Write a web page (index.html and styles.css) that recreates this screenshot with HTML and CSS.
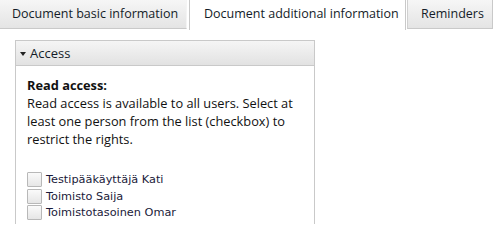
FILE: index.html
```html
<!DOCTYPE html>
<html>
<head>
<meta charset="utf-8">
<link rel="stylesheet" href="styles.css">
</head>
<body>
<div class="tabs">
  <div class="tab first">Document basic information</div>
  <div class="tab active">Document additional information</div>
  <div class="tab last">Reminders</div>
</div>
<div class="panel">
  <div class="box">
    <div class="box-head"><span class="tri"></span>Access</div>
    <div class="box-body">
      <p class="info"><b>Read access:</b><br>Read access is available to all users. Select at least one person from the list (checkbox) to restrict the rights.</p>
      <ul class="people">
        <li><span class="cb"></span>Testipääkäyttäjä Kati</li>
        <li><span class="cb"></span>Toimisto Saija</li>
        <li><span class="cb"></span>Toimistotasoinen Omar</li>
      </ul>
    </div>
  </div>
</div>
</body>
</html>
```
FILE: styles.css
```css
html, body {
  margin: 0;
  padding: 0;
  background: #fff;
}
body {
  font-family: "Open Sans", "DejaVu Sans", sans-serif;
  font-size: 13px;
  color: #111;
}
.tabs {
  display: flex;
  align-items: flex-start;
  height: 30px;
}
.tab {
  height: 28px;
  line-height: 28px;
  padding: 0 12px;
  color: #141c28;
  font-size: 12.5px;
  box-sizing: content-box;
  white-space: nowrap;
}
.tab.first {
  width: 162px;
  background: linear-gradient(#f6f6f6, #e4e4e4);
  border-bottom: 1px solid #c9c9c9;
  border-right: 1px solid #f4f4f4;
}
.tab.active {
  margin-left: 2px;
  width: 201px;
  height: 30px;
  background: #fff;
  border-left: 1px solid #c9c9c9;
  border-right: 1px solid #c9c9c9;
  padding: 0 0 0 14px;
}
.tab.last {
  margin-left: 1px;
  width: 60px;
  padding: 0 11px 0 13px;
  background: linear-gradient(#f6f6f6, #e4e4e4);
  border-left: 1px solid #d0d0d0;
  border-right: 1px solid #c9c9c9;
  border-bottom: 1px solid #c9c9c9;
}
.panel {
  padding: 10px 0 0 15px;
}
.box {
  width: 298px;
  height: 183px;
  border: 1px solid #c9c9c9;
  border-bottom: none;
}
.box-head {
  height: 24px;
  line-height: 24px;
  background: linear-gradient(#f5f5f5, #e2e2e2);
  border-bottom: 1px solid #c9c9c9;
  color: #141c28;
  font-size: 13px;
  display: flex;
  align-items: center;
  padding-left: 4px;
}
.tri {
  width: 0;
  height: 0;
  border-left: 3.5px solid transparent;
  border-right: 3.5px solid transparent;
  border-top: 4px solid #222;
  margin: 1px 4px 0 0;
}
.box-body {
  padding: 10px 11px 0 11px;
}
.info {
  margin: 0;
  line-height: 18px;
  font-size: 12.8px;
}
.info b {
  font-weight: bold;
}
.people {
  list-style: none;
  margin: 23px 0 0 0;
  padding: 0;
  font-family: "DejaVu Sans", sans-serif;
  font-size: 11.3px;
  color: #1a1a3a;
}
.people li {
  display: flex;
  align-items: center;
  height: 16.7px;
}
.cb {
  width: 13px;
  height: 13px;
  border: 1px solid #b8b8b8;
  border-radius: 1px;
  background: linear-gradient(#fafafa, #e6e6e6);
  margin-right: 4px;
  box-sizing: content-box;
}
```
